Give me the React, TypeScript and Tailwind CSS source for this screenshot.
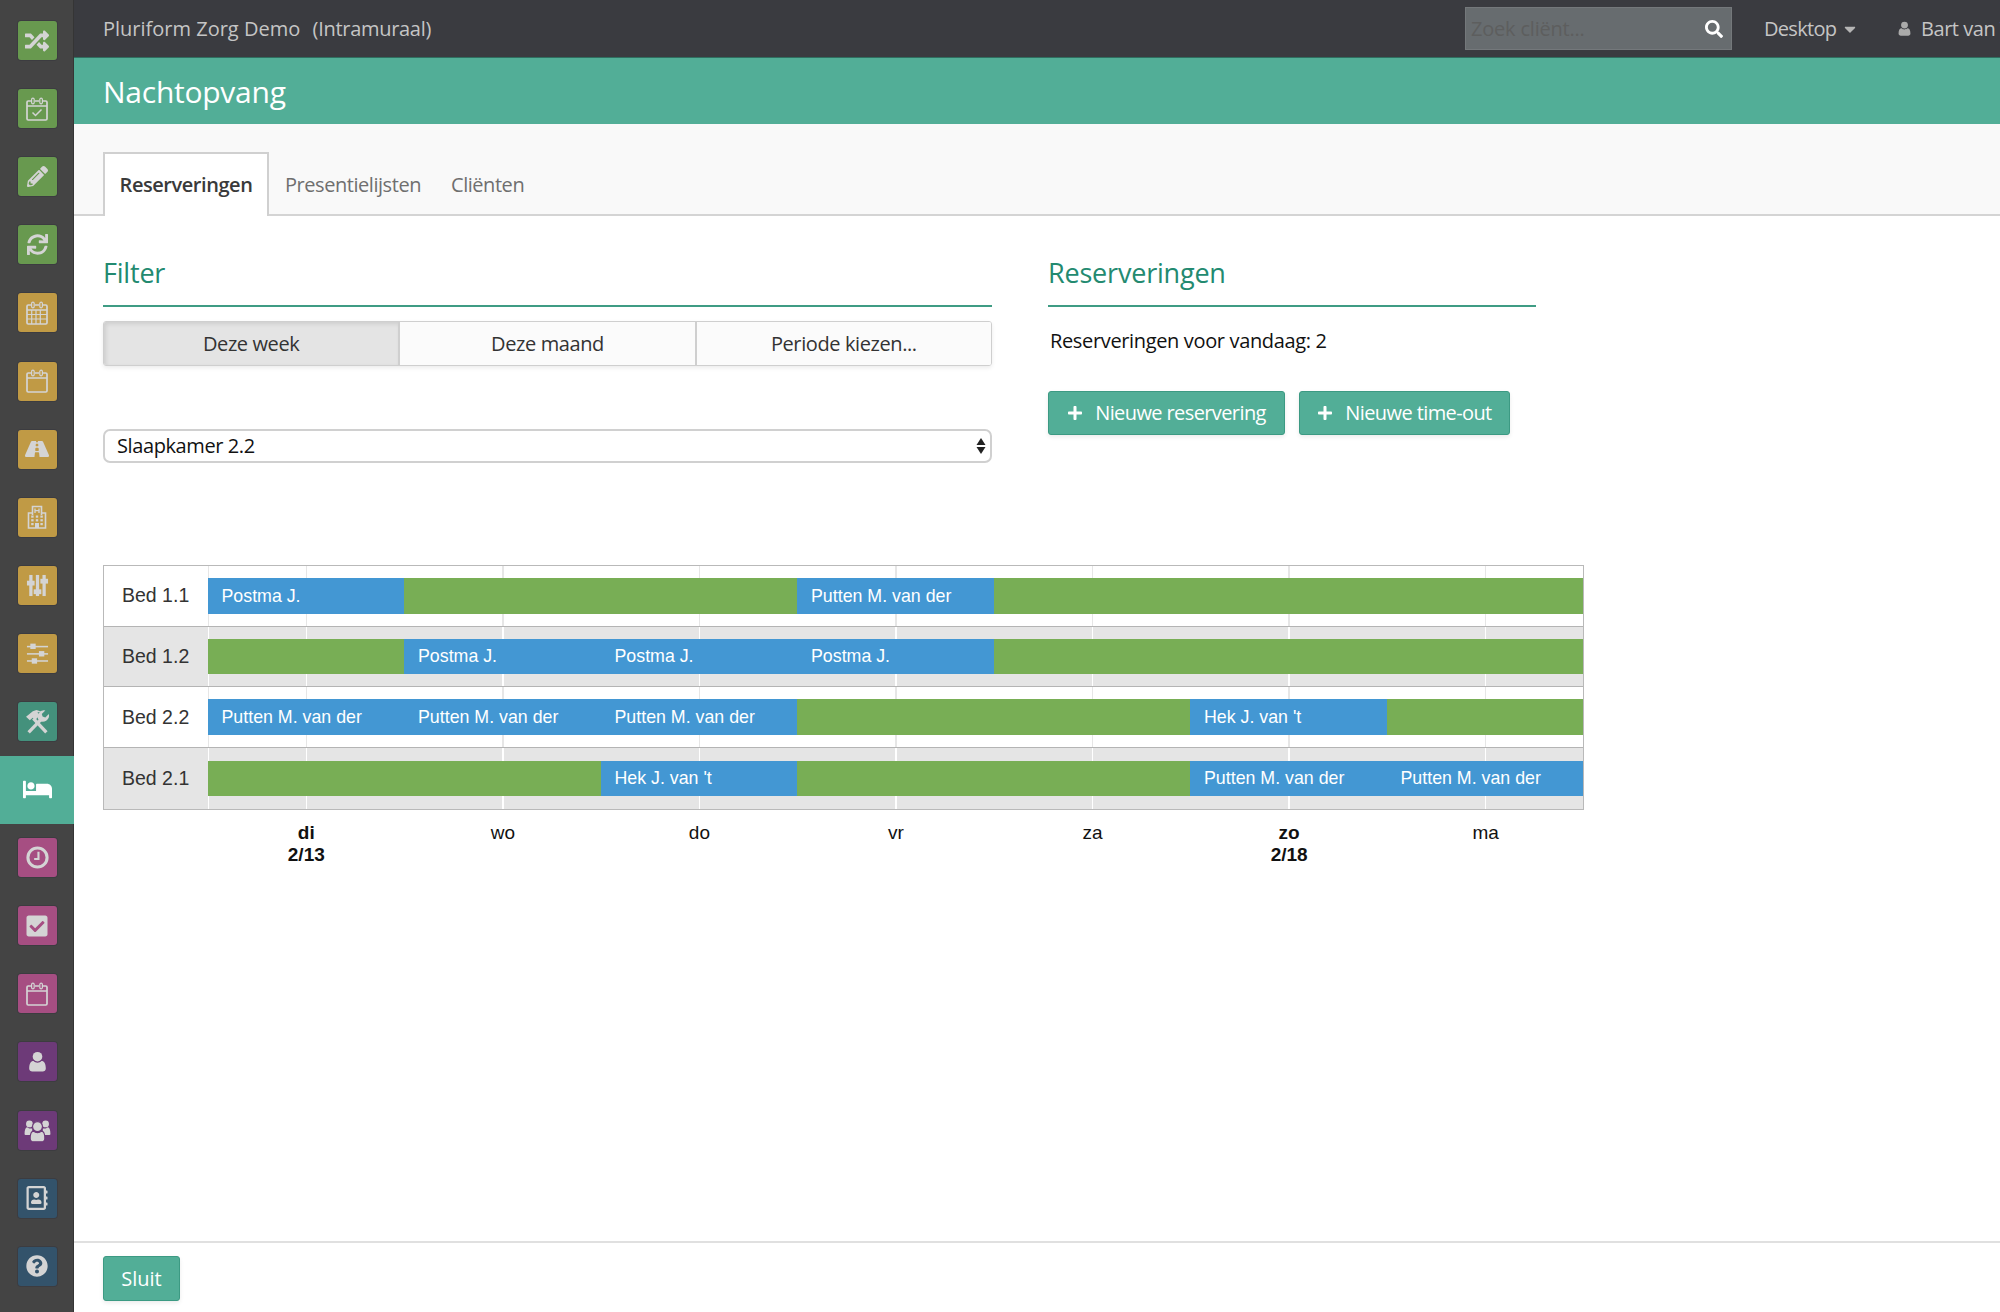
import React from "react";
import { FaRandom, FaPencilAlt, FaSync, FaRoad, FaBed, FaCheckSquare, FaRegAddressBook, FaQuestionCircle, FaSearch, FaPlus, FaCaretDown } from "react-icons/fa";

function Cal({ size, mode }: { size: number; mode?: "check" | "grid" }) {
  return (
    <svg width={size} height={size} viewBox="0 0 24 24" fill="none" stroke="currentColor">
      <path d="M6 4H3.2A1.2 1.2 0 0 0 2 5.2v16.6A1.2 1.2 0 0 0 3.2 23h17.6a1.2 1.2 0 0 0 1.2-1.2V5.2A1.2 1.2 0 0 0 20.8 4H18M10 4h4" strokeWidth="1.7" />
      <path d="M2 9h20" strokeWidth="1.5" />
      <rect x="6.6" y="1.2" width="2.6" height="5.6" rx="1.3" strokeWidth="1.2" />
      <rect x="14.8" y="1.2" width="2.6" height="5.6" rx="1.3" strokeWidth="1.2" />
      {mode === "check" && <path d="M7.5 15.5l3 3 6-6" strokeWidth="1.5" />}
      {mode === "grid" && <path d="M6.7 9v14M11 9v14M15.3 9v14M2 13.5h20M2 18h20" strokeWidth="1.2" />}
    </svg>
  );
}

function Hospital({ size }: { size: number }) {
  return (
    <svg width={size} height={size} viewBox="0 0 24 24" fill="currentColor">
      <path d="M7.5 8H3.5v15h17V8h-4M7.5 10V1.5h9V10" fill="none" stroke="currentColor" strokeWidth="1.6" />
      <path d="M10 3.500v4.500M14 3.500v4.500M10 5.700h4" fill="none" stroke="currentColor" strokeWidth="1.3" />
      <rect x="6.2" y="10.5" width="2.4" height="2.2" />
      <rect x="10.8" y="10.5" width="2.4" height="2.2" />
      <rect x="15.4" y="10.5" width="2.4" height="2.2" />
      <rect x="6.2" y="14.2" width="2.4" height="2.2" />
      <rect x="10.8" y="14.2" width="2.4" height="2.2" />
      <rect x="15.4" y="14.2" width="2.4" height="2.2" />
      <rect x="6.2" y="18" width="2.4" height="2.2" />
      <rect x="15.4" y="18" width="2.4" height="2.2" />
      <rect x="10" y="18" width="4" height="5" />
    </svg>
  );
}

function VSliders({ size }: { size: number }) {
  return (
    <svg width={size} height={size} viewBox="0 0 24 24" fill="currentColor">
      <rect x="3.4" y="1" width="3.4" height="22" />
      <rect x="10.3" y="1" width="3.4" height="22" />
      <rect x="17.2" y="1" width="3.4" height="22" />
      <rect x="1" y="7" width="8" height="5" />
      <rect x="8" y="16" width="8" height="5" />
      <rect x="15" y="5" width="8" height="5" />
    </svg>
  );
}

function HSliders({ size }: { size: number }) {
  return (
    <svg width={size} height={size} viewBox="0 0 24 24" fill="currentColor">
      <rect x="1" y="4" width="22" height="1.6" />
      <rect x="1" y="11.6" width="22" height="1.6" />
      <rect x="1" y="19" width="22" height="1.6" />
      <rect x="4.5" y="1.7" width="5.6" height="5.6" />
      <rect x="13.5" y="9.5" width="5.6" height="5.6" />
      <rect x="6" y="17" width="5.6" height="5.6" />
    </svg>
  );
}

function Tools({ size }: { size: number }) {
  return (
    <svg width={size} height={size} viewBox="0 0 24 24" fill="currentColor" stroke="none">
      <path d="M20.5 22.5 8 9" stroke="currentColor" strokeWidth="3.2" fill="none" />
      <path d="M1 7.5 7.5 2.2 11 1l4.5 1.5-3.5.8 2 3-4.2 4.2-2.4-2-2.8 2.2z" />
      <path d="M3.5 22.5 15.5 10" stroke="currentColor" strokeWidth="3.2" fill="none" />
      <path d="M13.5 11a6 6 0 0 1 6-9.6l-3.4 3.3.8 2.6 2.6.8 3.4-3.3a6 6 0 0 1-9.4 6.2z" />
    </svg>
  );
}

function Clock({ size }: { size: number }) {
  return (
    <svg width={size} height={size} viewBox="0 0 24 24" fill="none" stroke="currentColor">
      <circle cx="12" cy="12" r="10" strokeWidth="3.2" />
      <path d="M13 6v7.5H8.5" strokeWidth="2.2" />
    </svg>
  );
}

function User({ size, className }: { size: number; className?: string }) {
  return (
    <svg width={size} height={size} viewBox="0 0 24 24" fill="currentColor" className={className}>
      <circle cx="12" cy="6.5" r="5.5" />
      <path d="M2.5 20c0-5.500 1.800-8.500 5-8.500 1.100 1.200 2.700 1.900 4.500 1.900s3.400-.7 4.500-1.900c3.200 0 5 3 5 8.500 0 2.200-1.600 3.500-3.500 3.500H6c-1.900 0-3.500-1.300-3.500-3.500z" />
    </svg>
  );
}

function Users({ size }: { size: number }) {
  return (
    <svg width={size} height={size} viewBox="0 0 24 24" fill="currentColor">
      <circle cx="4.800" cy="6.200" r="3" />
      <circle cx="19.200" cy="6.200" r="3" />
      <path d="M.5 15c0-3.500.8-5.500 2.300-5.800.7.700 1.300 1 2 1h2.500V16H2c-1 0-1.500-.3-1.500-1zM23.500 15c0-3.500-.8-5.500-2.300-5.800-.7.700-1.300 1-2 1h-2.500V16H22c1 0 1.500-.3 1.500-1z" />
      <circle cx="12" cy="8.500" r="4.400" stroke="#6d3a78" strokeWidth="1" />
      <path d="M5.500 19c0-4 1.200-6.500 3-6.500.9.900 2.200 1.400 3.500 1.400s2.600-.5 3.500-1.400c1.800 0 3 2.500 3 6.500 0 1.800-1.300 3-3 3H8.500c-1.700 0-3-1.200-3-3z" stroke="#6d3a78" strokeWidth="1" />
    </svg>
  );
}

const green = "bg-[#68994f]";
const gold = "bg-[#c09a45]";
const teal = "bg-[#44917c]";
const pink = "bg-[#a64e82]";
const purple = "bg-[#6d3a78]";
const navy = "bg-[#33536b]";

const nav: { bg: string; icon: React.ReactNode }[] = [
  { bg: green, icon: <FaRandom size={24} /> },
  { bg: green, icon: <Cal size={24} mode="check" /> },
  { bg: green, icon: <FaPencilAlt size={21} /> },
  { bg: green, icon: <FaSync size={21} /> },
  { bg: gold, icon: <Cal size={24} mode="grid" /> },
  { bg: gold, icon: <Cal size={24} /> },
  { bg: gold, icon: <FaRoad size={24} /> },
  { bg: gold, icon: <Hospital size={24} /> },
  { bg: gold, icon: <VSliders size={23} /> },
  { bg: gold, icon: <HSliders size={23} /> },
  { bg: teal, icon: <Tools size={25} /> },
  { bg: "", icon: <FaBed size={29} /> },
  { bg: pink, icon: <Clock size={23} /> },
  { bg: pink, icon: <FaCheckSquare size={24} /> },
  { bg: pink, icon: <Cal size={24} /> },
  { bg: purple, icon: <User size={21} /> },
  { bg: purple, icon: <Users size={27} /> },
  { bg: navy, icon: <FaRegAddressBook size={24} /> },
  { bg: navy, icon: <FaQuestionCircle size={22} /> },
];

type Seg = { span: number; label?: string };

const rows: { name: string; grey: boolean; segs: Seg[] }[] = [
  { name: "Bed 1.1", grey: false, segs: [{ span: 1, label: "Postma J." }, { span: 2 }, { span: 1, label: "Putten M. van der" }, { span: 3 }] },
  { name: "Bed 1.2", grey: true, segs: [{ span: 1 }, { span: 1, label: "Postma J." }, { span: 1, label: "Postma J." }, { span: 1, label: "Postma J." }, { span: 3 }] },
  { name: "Bed 2.2", grey: false, segs: [{ span: 1, label: "Putten M. van der" }, { span: 1, label: "Putten M. van der" }, { span: 1, label: "Putten M. van der" }, { span: 2 }, { span: 1, label: "Hek J. van 't" }, { span: 1 }] },
  { name: "Bed 2.1", grey: true, segs: [{ span: 2 }, { span: 1, label: "Hek J. van 't" }, { span: 2 }, { span: 1, label: "Putten M. van der" }, { span: 1, label: "Putten M. van der" }] },
];

const days = [
  { d: "di", bold: true, date: "2/13" },
  { d: "wo" },
  { d: "do" },
  { d: "vr" },
  { d: "za" },
  { d: "zo", bold: true, date: "2/18" },
  { d: "ma" },
];

function GanttRow({ name, grey, segs }: { name: string; grey: boolean; segs: Seg[] }) {
  return (
    <div className={`flex h-[60.7px] border-b-[1.5px] border-[#b4b4b4] last:border-b-0 ${grey ? "bg-[#e5e5e5]" : "bg-white"}`}>
      <div className="w-[103.5px] pl-[18px] flex items-center text-[19.5px] text-[#333] shrink-0">{name}</div>
      <div className="flex-1 relative flex items-center">
        <div className="absolute inset-0 grid grid-cols-7">
          {days.map((x, i) => (
            <div key={i} className="relative">
              {i === 0 && <div className={`absolute left-0 top-0 bottom-0 w-[1.5px] ${grey ? "bg-white" : "bg-[#e6e6e6]"}`} />}
              <div className={`absolute left-1/2 top-0 bottom-0 w-[1.5px] ${grey ? "bg-white" : "bg-[#e6e6e6]"}`} />
            </div>
          ))}
        </div>
        <div className="relative w-full h-[35.5px] grid grid-cols-7">
          {segs.map((s, i) => (
            <div
              key={i}
              style={{ gridColumn: `span ${s.span}` }}
              className={`flex items-center pl-[14px] text-[17.8px] text-white whitespace-nowrap ${s.label ? "bg-[#4397d3]" : "bg-[#78ae55]"}`}
            >
              {s.label}
            </div>
          ))}
        </div>
      </div>
    </div>
  );
}

function TealButton({ label, w }: { label: string; w: string }) {
  return (
    <button className={`${w} h-[44px] flex items-center justify-center gap-[12px] rounded-[3px] bg-[#52ae97] border border-[#3c9a83] text-white text-[20px] tracking-[-0.6px] shadow-[0_2px_4px_rgba(0,0,0,0.08)]`}>
      <FaPlus size={16} />
      <span>{label}</span>
    </button>
  );
}

export default function App() {
  return (
    <div className="flex w-[2000px] h-[1312px] overflow-hidden bg-white font-['Open_Sans',sans-serif]">
      <aside className="w-[74px] shrink-0 bg-[#444444] shadow-[inset_-1px_0_0_#353535] pt-[6.5px]">
        {nav.map((n, i) =>
          n.bg ? (
            <div key={i} className="h-[68.1px] flex items-center justify-center">
              <div className={`w-[39px] h-[39px] rounded-[3px] flex items-center justify-center text-[#d4d4d4] shadow-[0_0_0_1px_rgba(50,50,60,0.4)] ${n.bg}`}>{n.icon}</div>
            </div>
          ) : (
            <div key={i} className="h-[68.1px] flex items-center justify-center bg-[#52ae97] text-white">
              {n.icon}
            </div>
          )
        )}
      </aside>
      <main className="flex-1 min-w-0 flex flex-col">
        <header className="h-[58px] bg-[#3a3b40] flex items-center pl-[29px] shrink-0 border-b border-[#2f6f60] overflow-hidden">
          <div className="text-[20px] text-[#c5c5c5] whitespace-pre flex-1">
            Pluriform Zorg Demo  <span className="ml-[2px] tracking-[-0.3px]">(Intramuraal)</span>
          </div>
          <div className="w-[267px] h-[43px] bg-[#676c6f] border border-[#74787b] flex items-center justify-between pl-[5px] pr-[8px]">
            <span className="text-[20px] text-[#5d5e5e] tracking-[-0.2px]">Zoek cliënt...</span>
            <FaSearch size={18} className="text-white" />
          </div>
          <div className="w-[165px] shrink-0 pl-[32px] flex items-center text-[20px] text-[#c5c5c5] tracking-[-0.7px]">
            Desktop
            <FaCaretDown size={18} className="ml-[5px] text-[#b5b5b5]" />
          </div>
          <div className="w-[103px] shrink-0 flex items-center text-[20px] text-[#c5c5c5] tracking-[-0.45px] whitespace-nowrap overflow-hidden">
            <User size={15} className="mr-[9px] shrink-0 text-[#aaa]" />
            Bart van Vliet
          </div>
        </header>
        <div className="h-[66px] bg-[#52ae97] flex items-center pl-[29px] text-[30px] text-white tracking-[-0.25px] shrink-0">Nachtopvang</div>
        <div className="h-[92px] bg-[#f9f9f9] border-b-2 border-[#d4d4d4] flex items-end pl-[29px] shrink-0">
          <div className="w-[166px] h-[64px] -mb-[2px] bg-white border-2 border-b-0 border-[#d0d0d0] flex items-center justify-center font-semibold text-[20px] text-[#3a3a3a] tracking-[-0.45px]">Reserveringen</div>
          <div className="ml-[16px] h-[58px] flex items-center text-[20px] text-[#6f6f6f] tracking-[-0.45px]">Presentielijsten</div>
          <div className="ml-[30px] h-[58px] flex items-center text-[20px] text-[#6f6f6f] tracking-[-0.45px]">Cliënten</div>
        </div>
        <div className="flex-1 pl-[29px] pt-[36px] min-h-0">
          <div className="flex gap-[56px] h-[313px]">
            <section className="w-[889px]">
              <h2 className="h-[55px] border-b-2 border-[#3f9c84] text-[27px] leading-[42px] text-[#238a70] tracking-[-0.2px]">Filter</h2>
              <div className="mt-[14px] h-[45px] flex border border-[#cfcfcf] rounded-[3px] text-[20px] text-[#333] tracking-[-0.4px] shadow-[0_2px_4px_rgba(0,0,0,0.08)] overflow-hidden">
                <div className="flex-1 bg-[#e4e4e4] flex items-center justify-center border-r-2 border-[#cfcfcf] shadow-[inset_2px_2px_4px_rgba(0,0,0,0.1)]">Deze week</div>
                <div className="flex-1 bg-[#fbfbfb] flex items-center justify-center border-r-2 border-[#cfcfcf]">Deze maand</div>
                <div className="flex-1 bg-[#fbfbfb] flex items-center justify-center">Periode kiezen...</div>
              </div>
              <div className="mt-[63px] h-[34px] flex items-center justify-between border-2 border-[#d0d0d0] rounded-[7px] pl-[12px] pr-[4px] text-[20px] text-[#111] tracking-[-0.4px]">
                <span>Slaapkamer 2.2</span>
                <svg width="10" height="18" viewBox="0 0 10 18" fill="#222">
                  <path d="M5 1 9.5 8H.5z" />
                  <path d="M5 17 .5 10h9z" />
                </svg>
              </div>
            </section>
            <section className="w-[488px]">
              <h2 className="h-[55px] border-b-2 border-[#3f9c84] text-[27px] leading-[42px] text-[#238a70] tracking-[-0.2px]">Reserveringen</h2>
              <p className="mt-[21px] ml-[2px] text-[20px] leading-[26px] text-[#111] tracking-[-0.35px]">Reserveringen voor vandaag: 2</p>
              <div className="mt-[37px] flex gap-[14px]">
                <TealButton label="Nieuwe reservering" w="w-[237px]" />
                <TealButton label="Nieuwe time-out" w="w-[211px]" />
              </div>
            </section>
          </div>
          <div className="w-[1481px] border-[1.5px] border-[#b9b9b9] font-['Liberation_Sans',sans-serif]">
            {rows.map((r) => (
              <GanttRow key={r.name} {...r} />
            ))}
          </div>
          <div className="w-[1481px] pl-[105px] font-['Liberation_Sans',sans-serif] text-[19px] leading-[22px] text-[#111] pt-[12.5px]">
            <div className="grid grid-cols-7">
              {days.map((x) => (
                <div key={x.d} className={`text-center ${x.bold ? "font-bold" : ""}`}>
                  <div>{x.d}</div>
                  {x.date && <div>{x.date}</div>}
                </div>
              ))}
            </div>
          </div>
        </div>
        <footer className="h-[71px] shrink-0 border-t-2 border-[#e0e0e0] pl-[29px] pt-[13px]">
          <button className="w-[77px] h-[45px] rounded-[3px] bg-[#52ae97] border border-[#3c9a83] text-white text-[20px] shadow-[0_2px_4px_rgba(0,0,0,0.08)]">Sluit</button>
        </footer>
      </main>
    </div>
  );
}
